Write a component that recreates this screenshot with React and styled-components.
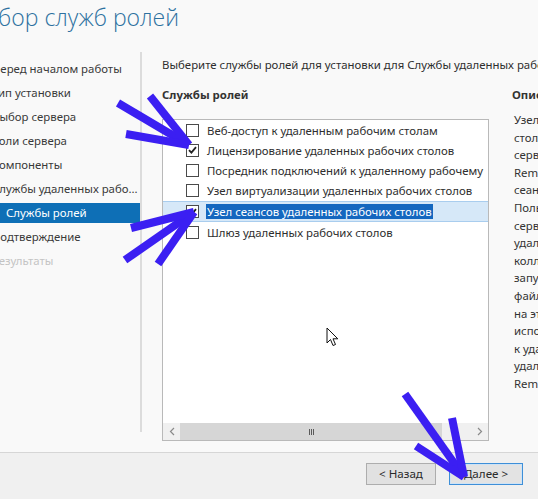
import React from 'react';
import styled, { createGlobalStyle } from 'styled-components';

const Global = createGlobalStyle`
  html, body { margin: 0; padding: 0; background: #f9f9f9; }
  body { font-family: "Noto Sans", "Open Sans", sans-serif; font-size: 11.4px; color: #2a2a2a; }
`;

const Window = styled.div`
  position: relative;
  width: 538px;
  height: 499px;
  overflow: hidden;
  display: flex;
  flex-direction: column;
  background: #f9f9f9;
`;

const Header = styled.header`
  flex: none;
  height: 52px;
`;

const Title = styled.h1`
  margin: 2px 0 0 -33px;
  font-family: "Open Sans", "Noto Sans", sans-serif;
  font-weight: 300;
  font-size: 23px;
  line-height: 30px;
  color: #2d71a0;
  white-space: nowrap;
`;

const Body = styled.div`
  flex: 1;
  display: flex;
  min-height: 0;
`;

const Nav = styled.nav`
  flex: none;
  width: 160px;
  margin: 0 0 20px -20px;
  padding-top: 5px;
  border-right: 2px solid #dcdcdc;
  display: flex;
  flex-direction: column;
`;

const NavItem = styled.div`
  height: 20px;
  margin: 2px 0;
  line-height: 20px;
  padding-left: ${p => (p.$sub ? 26 : 12)}px;
  white-space: nowrap;
  overflow: hidden;
  color: ${p => (p.$active ? '#ffffff' : p.$disabled ? '#c4c4c4' : '#3a3a3a')};
  background: ${p => (p.$active ? '#0e6fb6' : 'transparent')};
`;

const Content = styled.main`
  flex: 1;
  min-width: 0;
  padding: 5px 0 0 20px;
  display: flex;
  flex-direction: column;
`;

const Intro = styled.div`
  line-height: 16px;
  white-space: nowrap;
  color: #2e2e2e;
`;

const Columns = styled.div`
  margin-top: 14px;
  display: flex;
  gap: 23px;
`;

const LeftCol = styled.div`
  flex: none;
  width: 327px;
  display: flex;
  flex-direction: column;
`;

const RightCol = styled.div`
  flex: none;
  width: 220px;
  display: flex;
  flex-direction: column;
`;

const ColHead = styled.div`
  font-weight: 700;
  line-height: 16px;
  color: #333;
  white-space: nowrap;
`;

const ListBox = styled.div`
  margin-top: 16px;
  height: 322px;
  box-sizing: border-box;
  border: 1px solid #b9b9b9;
  background: #ffffff;
  display: flex;
  flex-direction: column;
`;

const Rows = styled.div`
  flex: 1;
  display: flex;
  flex-direction: column;
`;

const Row = styled.div`
  box-sizing: border-box;
  height: ${p => (p.$selected ? 21 : 20)}px;
  display: flex;
  align-items: center;
  gap: 8px;
  padding-left: 23px;
  white-space: nowrap;
  overflow: hidden;
  background: ${p => (p.$selected ? '#d6e8f8' : 'transparent')};
  border-top: 1px solid ${p => (p.$selected ? '#a9cdee' : 'transparent')};
  border-bottom: 1px solid ${p => (p.$selected ? '#a9cdee' : 'transparent')};
  margin-top: ${p => (p.$selected ? 1 : 0)}px;
  color: #2e2e2e;
`;

const Box = styled.span`
  flex: none;
  width: 11px;
  height: 11px;
  border: 1px solid #4a4a4a;
  background: #fff;
  display: flex;
  align-items: center;
  justify-content: center;
`;

const Label = styled.span`
  line-height: 15px;
  padding: 0 1px;
  margin-left: -1px;
  background: ${p => (p.$hl ? '#1467bf' : 'transparent')};
  color: ${p => (p.$hl ? '#ffffff' : 'inherit')};
`;

const HScroll = styled.div`
  flex: none;
  height: 17px;
  display: flex;
  background: #f0f0f0;
`;

const ScrollBtn = styled.div`
  flex: none;
  width: 17px;
  display: flex;
  align-items: center;
  justify-content: center;
`;

const Thumb = styled.div`
  flex: none;
  width: 262px;
  background: #d6d6d6;
  display: flex;
  align-items: center;
  justify-content: center;
  gap: 1px;
`;

const Grip = styled.span`
  width: 1px;
  height: 6px;
  background: #5a5a5a;
`;

const Track = styled.div`
  flex: 1;
`;

const DescText = styled.div`
  margin-top: 8px;
  line-height: 17.6px;
  color: #333;
  white-space: nowrap;
  margin-left: 2px;
`;

const Footer = styled.footer`
  flex: none;
  height: 36px;
  border-top: 1px solid #d6d6d6;
  background: #f0f0f0;
  display: flex;
  justify-content: flex-end;
  align-items: flex-start;
  gap: 13px;
  padding: 10px 15px 0 0;
`;

const Button = styled.button`
  width: ${p => p.$w}px;
  height: 22px;
  box-sizing: border-box;
  font-family: inherit;
  font-size: 11.6px;
  color: #2a2a2a;
  background: ${p => (p.$primary ? '#e3e3e3' : '#e1e1e1')};
  border: 1px solid ${p => (p.$primary ? '#3e8fd8' : '#adadad')};
  box-shadow: ${p => (p.$primary ? 'inset 0 0 0 1px #cfe3f5' : 'none')};
  padding: 0;
  line-height: 20px;
`;

const Overlay = styled.svg`
  position: absolute;
  left: 0;
  top: 0;
  pointer-events: none;
`;

const Cursor = styled.svg`
  position: absolute;
  left: 326px;
  top: 327px;
  pointer-events: none;
`;

const navItems = [
  { t: 'Перед началом работы' },
  { t: 'Тип установки' },
  { t: 'Выбор сервера' },
  { t: 'Роли сервера' },
  { t: 'Компоненты' },
  { t: 'Службы удаленных рабо...' },
  { t: 'Службы ролей', sub: true, active: true },
  { t: 'Подтверждение' },
  { t: 'Результаты', disabled: true },
];

const roles = [
  { t: 'Веб-доступ к удаленным рабочим столам', c: false },
  { t: 'Лицензирование удаленных рабочих столов', c: true },
  { t: 'Посредник подключений к удаленному рабочему', c: false },
  { t: 'Узел виртуализации удаленных рабочих столов', c: false },
  { t: 'Узел сеансов удаленных рабочих столов', c: true, sel: true },
  { t: 'Шлюз удаленных рабочих столов', c: false },
];

const desc = [
  'Узел сеансов удаленных рабочих',
  'столов позволяет',
  'серверу размещать программы',
  'RemoteApp или рабочие столы на основе',
  'сеансов.',
  'Пользователи могут подключаться к',
  'серверам узла сеансов',
  'удаленных рабочих столов в',
  'коллекции для',
  'запуска программ, сохранения',
  'файлов и использования ресурсов',
  'на этих серверах. Пользователи могут',
  'использовать клиент подключения',
  'к удаленному рабочему столу или',
  'удаленные приложения и программы',
  'RemoteApp.',
];

const Check = () => (
  <svg width="9" height="8" viewBox="0 0 9 8">
    <path d="M1 4.2 L3.4 6.6 L8 1.2" fill="none" stroke="#222" strokeWidth="1.8" />
  </svg>
);

const Chevron = ({ dir }) => (
  <svg width="6" height="9" viewBox="0 0 6 9">
    <path
      d={dir === 'left' ? 'M5 1 L1.5 4.5 L5 8' : 'M1 1 L4.5 4.5 L1 8'}
      fill="none"
      stroke="#8a8a8a"
      strokeWidth="1.2"
    />
  </svg>
);

const ArrowMark = ({ from, tip, a, b }) => (
  <g stroke="#3b1ff2" strokeWidth="8" fill="none" strokeLinecap="butt">
    <line x1={from[0]} y1={from[1]} x2={tip[0]} y2={tip[1]} />
    <line x1={a[0]} y1={a[1]} x2={tip[0]} y2={tip[1]} />
    <line x1={b[0]} y1={b[1]} x2={tip[0]} y2={tip[1]} />
  </g>
);

export default function App() {
  return (
    <>
      <Global />
      <Window>
        <Header>
          <Title>Выбор служб ролей</Title>
        </Header>
        <Body>
          <Nav>
            {navItems.map(n => (
              <NavItem key={n.t} $sub={n.sub} $active={n.active} $disabled={n.disabled}>
                {n.t}
              </NavItem>
            ))}
          </Nav>
          <Content>
            <Intro>Выберите службы ролей для установки для Службы удаленных рабочих столов</Intro>
            <Columns>
              <LeftCol>
                <ColHead>Службы ролей</ColHead>
                <ListBox>
                  <Rows>
                    {roles.map(r => (
                      <Row key={r.t} $selected={r.sel}>
                        <Box>{r.c && <Check />}</Box>
                        <Label $hl={r.sel}>{r.t}</Label>
                      </Row>
                    ))}
                  </Rows>
                  <HScroll>
                    <ScrollBtn><Chevron dir="left" /></ScrollBtn>
                    <Thumb>
                      <Grip /><Grip /><Grip />
                    </Thumb>
                    <Track />
                    <ScrollBtn><Chevron dir="right" /></ScrollBtn>
                  </HScroll>
                </ListBox>
              </LeftCol>
              <RightCol>
                <ColHead>Описание</ColHead>
                <DescText>
                  {desc.map(l => (
                    <div key={l}>{l}</div>
                  ))}
                </DescText>
              </RightCol>
            </Columns>
          </Content>
        </Body>
        <Footer>
          <Button $w={70}>&lt; Назад</Button>
          <Button $w={74} $primary>Далее &gt;</Button>
        </Footer>
        <Overlay width="538" height="499" viewBox="0 0 538 499">
          <ArrowMark from={[118, 103]} tip={[189, 145]} a={[150, 96]} b={[126, 134]} />
          <ArrowMark from={[125, 260]} tip={[194, 212]} a={[131, 228]} b={[158, 264]} />
          <ArrowMark from={[405, 394]} tip={[464, 477]} a={[416, 446]} b={[452, 418]} />
        </Overlay>
        <Cursor width="13" height="21" viewBox="0 0 13 21">
          <path
            d="M1 1 L1 16 L4.5 12.5 L7 18.5 L9.5 17.5 L7 11.8 L11.8 11.8 Z"
            fill="#fff"
            stroke="#111"
            strokeWidth="1"
            strokeLinejoin="miter"
          />
        </Cursor>
      </Window>
    </>
  );
}
